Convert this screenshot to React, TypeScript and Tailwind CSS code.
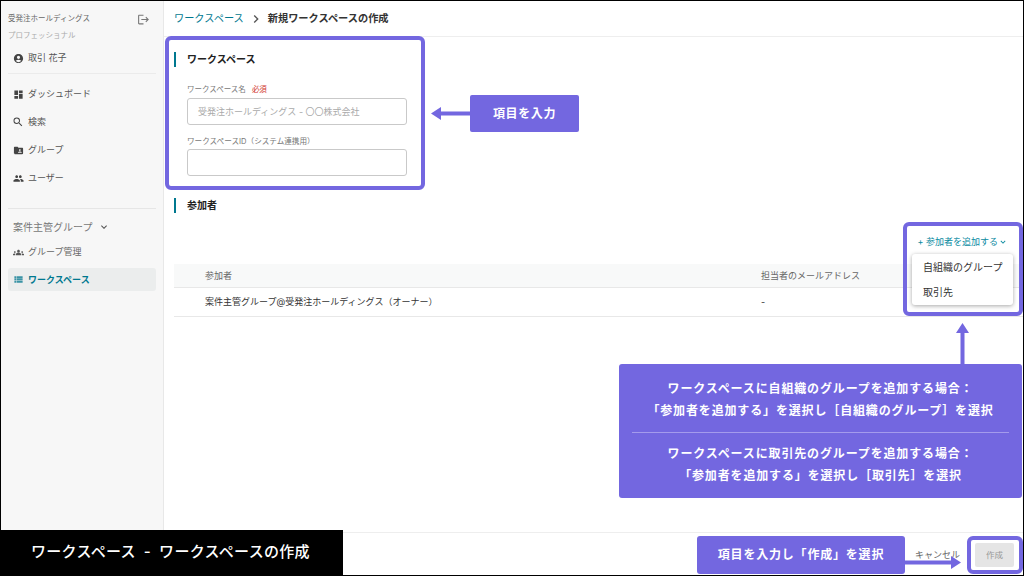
import type { ReactNode } from "react";
import {
  MdAccountCircle,
  MdDashboard,
  MdSearch,
  MdFolderShared,
  MdPeople,
  MdExpandMore,
  MdGroups,
  MdViewList,
  MdLogout,
  MdChevronRight,
} from "react-icons/md";

const font = "font-['Inter','Noto_Sans_CJK_JP','Noto_Sans',sans-serif]";

function NavItem({ icon, label }: { icon: ReactNode; label: string }) {
  return (
    <div className="flex h-[28px] items-center gap-[4px] pl-[4px] text-[9px] text-[#555]">
      <span className="flex w-[12px] justify-center text-[#444]">{icon}</span>
      {label}
    </div>
  );
}

function Sidebar() {
  return (
    <aside className="flex w-[163px] shrink-0 flex-col border-r border-[#e8e8e8] bg-[#f7f7f7] px-[7px]">
      <div className="mt-[11px] flex h-[14px] items-center justify-between pr-[6px] text-[7.5px] text-[#666]">
        受発注ホールディングス
        <MdLogout size={13} className="text-[#777]" />
      </div>
      <div className="mt-[3px] text-[7.5px] leading-[14px] text-[#aaa]">プロフェッショナル</div>
      <div className="mt-[5px] flex h-[20px] items-center gap-[4px] pl-[4px] text-[9px] text-[#555]">
        <span className="flex w-[12px] justify-center text-[#444]">
          <MdAccountCircle size={11} />
        </span>
        取引 花子
      </div>
      <div className="mt-[5px] h-px bg-[#ebebeb]" />
      <div className="mt-[6px]">
        <NavItem icon={<MdDashboard size={11} />} label="ダッシュボード" />
        <NavItem icon={<MdSearch size={12} />} label="検索" />
        <NavItem icon={<MdFolderShared size={11} />} label="グループ" />
        <NavItem icon={<MdPeople size={11} />} label="ユーザー" />
      </div>
      <div className="mt-[16px] h-px bg-[#e6e6e6]" />
      <div className="mt-[10px] flex h-[16px] items-center gap-[6px] pl-[5px] text-[10px] text-[#777]">
        案件主管グループ
        <MdExpandMore size={12} className="text-[#555]" />
      </div>
      <div className="mt-[4px] flex h-[26px] items-center gap-[4px] pl-[4px] text-[9px] text-[#666]">
        <span className="flex w-[12px] justify-center text-[#555]">
          <MdGroups size={11} />
        </span>
        グループ管理
      </div>
      <div className="mt-[3px] flex h-[23px] items-center gap-[4px] rounded-[3px] bg-[#ebeded] pl-[4px] text-[9px] font-bold text-[#00788f]">
        <span className="flex w-[12px] justify-center text-[#3a93a5]">
          <MdViewList size={11} />
        </span>
        ワークスペース
      </div>
    </aside>
  );
}

function SectionTitle({ children }: { children: string }) {
  return (
    <div className="flex h-[15px] items-center border-l-[2px] border-[#00788f] pl-[11px] text-[10px] font-bold text-[#222]">
      {children}
    </div>
  );
}

function Content() {
  return (
    <main className="flex min-w-0 flex-1 flex-col bg-white">
      <header className="flex h-[36px] shrink-0 items-center border-b border-[#eeeeee] pl-[10px] text-[10.2px]">
        <span className="text-[#00788f]">ワークスペース</span>
        <MdChevronRight size={16} className="mx-[4px] text-[#555]" />
        <span className="font-bold text-[#333]">新規ワークスペースの作成</span>
      </header>
      <div className="flex-1 pl-[10px] pt-[15px]">
        <SectionTitle>ワークスペース</SectionTitle>
        <div className="mt-[16px] pl-[13px]">
          <div className="flex h-[14px] items-center gap-[6px] text-[7.5px] text-[#777]">
            ワークスペース名
            <span className="text-[#d0342c]">必須</span>
          </div>
          <div className="mt-[1px] flex h-[27px] w-[220px] items-center rounded-[3px] border border-[#c9c9c9] pl-[10px] text-[9px] text-[#aaa]">
            受発注ホールディングス - 〇〇株式会社
          </div>
          <div className="mt-[10px] flex h-[14px] items-center text-[7.6px] text-[#777]">
            ワークスペースID（システム連携用）
          </div>
          <div className="h-[27px] w-[220px] rounded-[3px] border border-[#c9c9c9]" />
        </div>
        <div className="mt-[22px]">
          <SectionTitle>参加者</SectionTitle>
        </div>
        <div className="mb-[11px] mt-[18px] flex h-[22px] items-center justify-end pr-[15px] text-[9px] text-[#0a8a9f]">
          + 参加者を追加する
          <MdExpandMore size={10} />
        </div>
        <div className="flex h-[24px] items-center border-b border-[#e8e8e8] bg-[#f8f9f9] pl-[31px] text-[9px] text-[#666]">
          <span className="w-[556px]">参加者</span>
          <span>担当者のメールアドレス</span>
        </div>
        <div className="flex h-[29px] items-center border-b border-[#e8e8e8] pl-[31px] text-[9px] text-[#333]">
          <span className="w-[556px]">案件主管グループ@受発注ホールディングス（オーナー）</span>
          <span>-</span>
        </div>
      </div>
      <footer className="flex h-[43px] shrink-0 items-center justify-end gap-[15px] border-t border-[#eeeeee] pr-[9px]">
        <span className="mt-[2px] text-[9px] text-[#666]">キャンセル</span>
        <span className="mt-[2px] flex h-[24px] w-[39px] items-center justify-center rounded-[2px] bg-[#e5e5e5] text-[8.5px] text-[#999]">
          作成
        </span>
      </footer>
    </main>
  );
}

function Annotations() {
  return (
    <>
      <div className="absolute left-[164px] top-[35px] h-[154px] w-[260px] rounded-[6px] border-[4px] border-[#7367e0]" />
      <div className="absolute left-[902px] top-[221px] h-[94px] w-[120px] rounded-[6px] border-[4px] border-[#7367e0]" />
      <div className="absolute left-[966px] top-[535px] h-[38px] w-[56px] rounded-[6px] border-[4px] border-[#7367e0]" />

      {/* dropdown menu */}
      <div className="absolute left-[911px] top-[253px] flex h-[51px] w-[101px] flex-col justify-center gap-[8px] rounded-[3px] bg-white pl-[11px] text-[10px] leading-[17px] text-[#333] shadow-[0_1px_4px_rgba(0,0,0,0.35)]">
        <span>自組織のグループ</span>
        <span>取引先</span>
      </div>

      <div className="absolute left-[469px] top-[94px] flex h-[37px] w-[109px] items-center justify-center rounded-[2px] bg-[#7367e0] text-[12px] font-bold tracking-[0.6px] text-white">
        項目を入力
      </div>
      <svg className="absolute left-[430px] top-[106px]" width="40" height="13" viewBox="0 0 40 13">
        <path d="M0 6.5 L10 0 V4.5 H40 V8.5 H10 V13 Z" fill="#7367e0" />
      </svg>

      <svg className="absolute left-[955px] top-[322px]" width="13" height="42" viewBox="0 0 13 42">
        <path d="M6.5 0 L13 10 H8.5 V42 H4.5 V10 H0 Z" fill="#7367e0" />
      </svg>
      <div className="absolute left-[618px] top-[363px] flex h-[134px] w-[403px] flex-col items-center rounded-[3px] bg-[#7367e0] px-[13px] pt-[14px] text-[12px] font-bold leading-[22px] tracking-[0.85px] text-white">
        <p>ワークスペースに自組織のグループを追加する場合：</p>
        <p>「参加者を追加する」を選択し［自組織のグループ］を選択</p>
        <div className="my-[10px] h-px w-full bg-[#a49bec]" />
        <p>ワークスペースに取引先のグループを追加する場合：</p>
        <p>「参加者を追加する」を選択し［取引先］を選択</p>
      </div>

      <div className="absolute left-[696px] top-[535px] flex h-[38px] w-[208px] items-center justify-center rounded-[3px] bg-[#7367e0] text-[12px] font-bold tracking-[0.8px] text-white">
        項目を入力し「作成」を選択
      </div>
      <svg className="absolute left-[903px] top-[555px]" width="57" height="13" viewBox="0 0 57 13">
        <path d="M0 4.5 H47 V0 L57 6.5 L47 13 V8.5 H0 Z" fill="#7367e0" />
      </svg>

      <div className="absolute bottom-0 left-[-1px] flex h-[45px] w-[343px] items-center bg-black pl-[31px] text-[15px] font-medium tracking-[0.3px] text-white">
        ワークスペース
        <span className="mx-[8px]">-</span>
        ワークスペースの作成
      </div>
    </>
  );
}

export default function App() {
  return (
    <div className={`relative flex h-[576px] w-[1024px] overflow-hidden border border-black bg-white ${font}`}>
      <Sidebar />
      <Content />
      <Annotations />
    </div>
  );
}
